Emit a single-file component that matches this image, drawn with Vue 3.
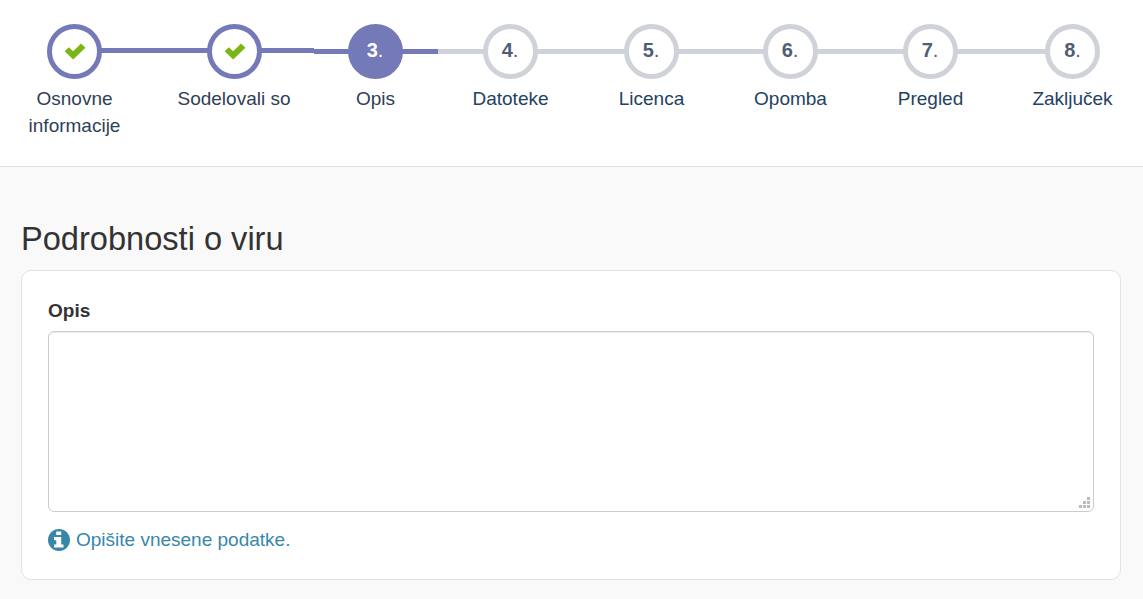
<script setup>
const steps = [
  { label: ['Osnovne', 'informacije'], state: 'done', first: true },
  { label: ['Sodelovali so'], state: 'done' },
  { label: ['Opis'], state: 'active', num: '3' },
  { label: ['Datoteke'], state: 'todo', num: '4' },
  { label: ['Licenca'], state: 'todo', num: '5' },
  { label: ['Opomba'], state: 'todo', num: '6' },
  { label: ['Pregled'], state: 'todo', num: '7' },
  { label: ['Zaključek'], state: 'todo', num: '8', last: true }
]
</script>

<template>
  <div class="page">
    <header class="wizard">
      <div
        v-for="(s, i) in steps"
        :key="i"
        class="step"
        :class="[s.state, { first: s.first, last: s.last }]"
      >
        <div class="head">
          <div class="dot">
            <svg v-if="s.state === 'done'" class="check" viewBox="0 0 22 17">
              <path d="M0.6 8.2 4.8 4.2 9.2 8.2 17 0.6 21.4 4.8 9.2 16.4z" />
            </svg>
            <span v-else class="num">{{ s.num }}<span class="period">.</span></span>
          </div>
        </div>
        <div class="label">
          <div v-for="line in s.label" :key="line">{{ line }}</div>
        </div>
      </div>
    </header>

    <main class="content">
      <h2 class="title">Podrobnosti o viru</h2>
      <section class="card">
        <label class="field-label" for="opis">Opis</label>
        <div class="area-wrap">
          <textarea id="opis" class="area"></textarea>
          <svg class="grip" width="12" height="12" viewBox="0 0 12 12">
            <rect x="8" y="0" width="3" height="3" />
            <rect x="4" y="4" width="3" height="3" />
            <rect x="8" y="4" width="3" height="3" />
            <rect x="0" y="8" width="3" height="3" />
            <rect x="4" y="8" width="3" height="3" />
            <rect x="8" y="8" width="3" height="3" />
          </svg>
        </div>
        <p class="help">
          <svg class="info" viewBox="0 0 22 22">
            <circle cx="11" cy="11" r="11" />
            <path class="info-i" d="M8.2 2.5h5v3.6h-5zM6 8h7.2v7.4h2.3v3.2H6v-3.2h2.3v-4.2H6z" />
          </svg>
          <span>Opišite vnesene podatke.</span>
        </p>
      </section>
    </main>
  </div>
</template>

<style>
html, body { margin: 0; background: #f9f9f9; }
</style>

<style scoped>
.page {
  width: 1143px;
  height: 599px;
  overflow: hidden;
  font-family: "Liberation Sans", Arial, sans-serif;
  background: #f9f9f9;
}
.wizard {
  display: grid;
  grid-template-columns: 154px 160px 124px 144px 138px 140px 140px 145px;
  padding-top: 24px;
  height: 142px;
  background: #fff;
  border-bottom: 1px solid #e3e3e3;
}
.step { display: flex; flex-direction: column; align-items: center; min-width: 0; }
.head {
  align-self: stretch;
  display: flex;
  justify-content: center;
  background-repeat: no-repeat;
  background-size: 100% 5px;
  background-position: 0 25px;
}
.done .head { background-image: linear-gradient(#7479b7, #7479b7); background-position: 0 24px; }
.active .head { background-image: linear-gradient(#7479b7, #7479b7); padding-right: 2px; }
.todo .head { background-image: linear-gradient(#cfd2d8, #cfd2d8); }
.first .head { padding-right: 6px; background-size: calc(50% + 3px) 5px; background-position: 100% 24px; }
.last .head { background-size: 50% 5px; background-position: 0 25px; }
.dot {
  width: 55px;
  height: 55px;
  box-sizing: border-box;
  border-radius: 50%;
  border: 5.5px solid #cfd2d8;
  background: #fff;
  display: flex;
  align-items: center;
  justify-content: center;
}
.done .dot { border-color: #7479b7; }
.active .dot { border-color: #7479b7; background: #7479b7; }
.check { width: 22px; height: 17px; fill: #7cb518; margin: -1px 0 0 1px; }
.num {
  font-size: 20px;
  font-weight: 700;
  color: #4f5d75;
  margin-top: -3px;
}
.period { font-weight: 400; }
.active .num { color: #fff; }
.label {
  margin-top: 6px;
  font-size: 19px;
  line-height: 28px;
  text-align: center;
  color: #2f3f57;
  white-space: nowrap;
}
.label div + div { margin-top: -1px; }
.first .label { padding-right: 5px; }
.active .label { padding-right: 1px; }
.todo .label { color: #234262; padding-left: 1px; }
.last .label { padding-left: 0; }
.content { padding: 0 22px 0 21px; }
.title {
  margin: 0;
  padding-top: 50px;
  font-size: 32.6px;
  line-height: 44px;
  font-weight: 400;
  color: #333;
}
.card {
  margin-top: 9px;
  height: 310px;
  box-sizing: border-box;
  padding: 27px 26px 0;
  background: #fff;
  border: 1px solid #e3e3e3;
  border-radius: 10px;
}
.field-label {
  display: block;
  font-size: 19px;
  line-height: 26px;
  font-weight: 700;
  color: #333;
}
.area-wrap { position: relative; margin-top: 7px; }
.area {
  display: block;
  width: 100%;
  height: 181px;
  box-sizing: border-box;
  resize: none;
  outline: none;
  background: #fff;
  border: 1px solid #ccc;
  border-radius: 6px;
  box-shadow: inset 0 1px 1px rgba(0, 0, 0, 0.075);
}
.grip { position: absolute; right: 3px; bottom: 3px; fill: #bbb; }
.help {
  display: flex;
  align-items: center;
  gap: 6px;
  margin: 16px 0 0;
  font-size: 19px;
  line-height: 24px;
  color: #3787ad;
}
.info { width: 22px; height: 22px; fill: #3787ad; flex: none; }
.info-i { fill: #fff; }
</style>
